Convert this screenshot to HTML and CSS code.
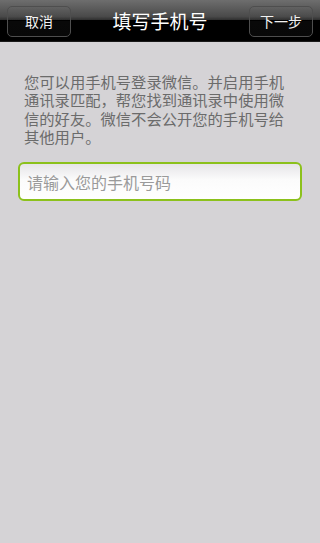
FILE: index.html
```html
<!DOCTYPE html>
<html lang="zh">
<head>
<meta charset="utf-8">
<link rel="stylesheet" href="styles.css">
</head>
<body>
<header class="bar">
  <button class="bar-btn">取消</button>
  <h1 class="bar-title">填写手机号</h1>
  <button class="bar-btn">下一步</button>
</header>
<main class="content">
  <p class="intro">您可以用手机号登录微信。并启用手机通讯录匹配，帮您找到通讯录中使用微信的好友。微信不会公开您的手机号给其他用户。</p>
  <div class="field"><span class="placeholder">请输入您的手机号码</span></div>
</main>
</body>
</html>
```
FILE: styles.css
```css
html, body {
  margin: 0;
  padding: 0;
  height: 100%;
}
body {
  background: #d5d3d6;
  font-family: "Noto Sans CJK SC", "Noto Sans", sans-serif;
}
.bar {
  height: 42px;
  box-sizing: border-box;
  display: flex;
  align-items: center;
  justify-content: space-between;
  padding: 0 7px;
  background: linear-gradient(to bottom, #6e6e6e 0%, #4a4a4a 40%, #2e2e2e 49%, #000 50%, #000 100%);
  border-bottom: 1px solid #1a1a1a;
}
.bar-btn {
  width: 64px;
  height: 31px;
  margin-top: 1px;
  border: 1px solid #4e4e4e;
  border-radius: 5px;
  background: linear-gradient(to bottom, rgba(255,255,255,0.02) 0%, rgba(255,255,255,0) 50%, rgba(30,30,30,0.3) 50%, rgba(20,20,20,0.4) 100%);
  color: #f2f2f2;
  font-family: inherit;
  font-size: 14px;
  line-height: 1;
  padding: 0;
}
.bar-title {
  margin: 0;
  color: #fff;
  font-size: 19px;
  font-weight: normal;
  line-height: 1;
}
.content {
  padding: 30px 18px 0;
}
.intro {
  margin: 0 6px 17px;
  color: #6b6b6b;
  font-size: 15.3px;
  line-height: 18.33px;
}
.field {
  height: 39px;
  box-sizing: border-box;
  border: 2px solid #8cc11c;
  border-radius: 6px;
  background: linear-gradient(to bottom, #e6e5e8 0%, #fbfbfb 45%, #ffffff 100%);
  display: flex;
  align-items: center;
  padding: 0 7px;
}
.placeholder {
  color: #9a9a9a;
  font-size: 16px;
}
```
